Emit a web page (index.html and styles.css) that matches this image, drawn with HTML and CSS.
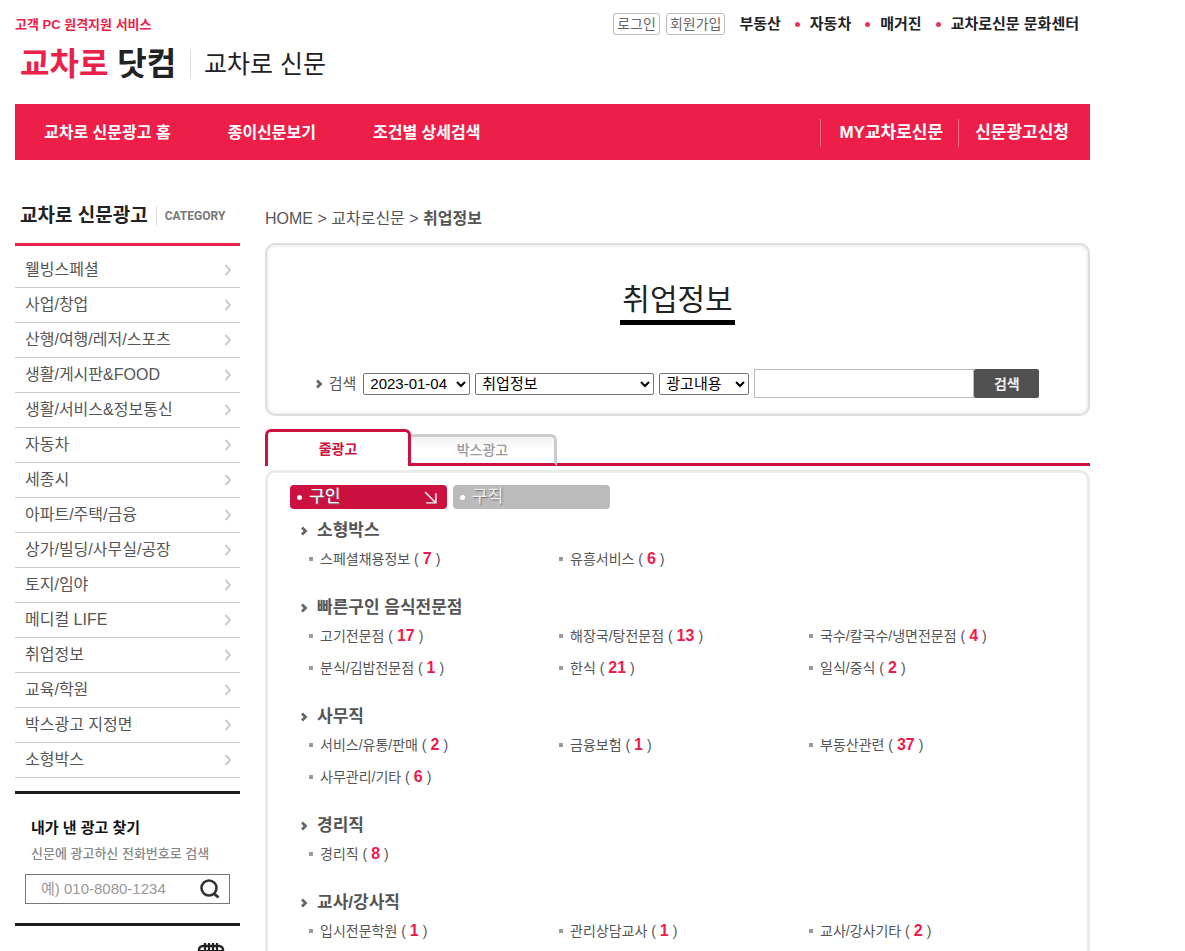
FILE: index.html
```html
<!DOCTYPE html>
<html lang="ko">
<head>
<meta charset="utf-8">
<title>교차로 신문 - 취업정보</title>
<link rel="stylesheet" href="styles.css">
</head>
<body>
<svg class="defs" aria-hidden="true">
  <symbol id="chev" viewBox="0 0 8 12"><path d="M1.500 1 6 6 1.500 11" fill="none" stroke="currentColor" stroke-width="2"/></symbol>
  <symbol id="mark" viewBox="0 0 7 10"><path d="M1 1.500 4.500 5 1 8.500" fill="none" stroke="currentColor" stroke-width="2.800"/></symbol>
</svg>
<div class="page">
  <header class="header">
    <div class="brand">
      <a class="remote" href="#">고객 PC 원격지원 서비스</a>
      <div class="logos">
        <a class="logo" href="#"><span class="logo-red">교차로</span> 닷컴</a>
        <a class="logo-sub" href="#">교차로 신문</a>
      </div>
    </div>
    <nav class="util">
      <a class="pill" href="#">로그인</a>
      <a class="pill" href="#">회원가입</a>
      <ul class="sites">
        <li><a href="#">부동산</a></li>
        <li><a href="#">자동차</a></li>
        <li><a href="#">매거진</a></li>
        <li><a href="#">교차로신문 문화센터</a></li>
      </ul>
    </nav>
  </header>

  <nav class="gnb">
    <div class="gnb-left">
      <a href="#">교차로 신문광고 홈</a>
      <a href="#">종이신문보기</a>
      <a href="#">조건별 상세검색</a>
    </div>
    <div class="gnb-right">
      <a href="#">MY교차로신문</a>
      <a href="#">신문광고신청</a>
    </div>
  </nav>

  <div class="body">
    <aside class="side">
      <h2 class="side-title"><span class="side-name">교차로 신문광고</span><span class="side-en">CATEGORY</span></h2>
      <ul class="cats">
        <li><a href="#">웰빙스페셜<svg><use href="#chev"/></svg></a></li>
        <li><a href="#">사업/창업<svg><use href="#chev"/></svg></a></li>
        <li><a href="#">산행/여행/레저/스포츠<svg><use href="#chev"/></svg></a></li>
        <li><a href="#">생활/게시판&amp;FOOD<svg><use href="#chev"/></svg></a></li>
        <li><a href="#">생활/서비스&amp;정보통신<svg><use href="#chev"/></svg></a></li>
        <li><a href="#">자동차<svg><use href="#chev"/></svg></a></li>
        <li><a href="#">세종시<svg><use href="#chev"/></svg></a></li>
        <li><a href="#">아파트/주택/금융<svg><use href="#chev"/></svg></a></li>
        <li><a href="#">상가/빌딩/사무실/공장<svg><use href="#chev"/></svg></a></li>
        <li><a href="#">토지/임야<svg><use href="#chev"/></svg></a></li>
        <li><a href="#">메디컬 LIFE<svg><use href="#chev"/></svg></a></li>
        <li><a href="#">취업정보<svg><use href="#chev"/></svg></a></li>
        <li><a href="#">교육/학원<svg><use href="#chev"/></svg></a></li>
        <li><a href="#">박스광고 지정면<svg><use href="#chev"/></svg></a></li>
        <li><a href="#">소형박스<svg><use href="#chev"/></svg></a></li>
      </ul>
      <form class="find">
        <label class="find-title" for="tel">내가 낸 광고 찾기</label>
        <p class="find-sub">신문에 광고하신 전화번호로 검색</p>
        <div class="find-box">
          <input id="tel" type="text" placeholder="예) 010-8080-1234">
          <button type="button" aria-label="검색"><svg viewBox="0 0 20 20"><circle cx="9" cy="9" r="7.500" fill="none" stroke="#333" stroke-width="2.600"/><path d="M14 14.500 18.500 18.500" stroke="#333" stroke-width="3"/></svg></button>
        </div>
      </form>
      <div class="calendar">
        <svg viewBox="0 0 28 26"><rect x="2" y="3" width="24" height="22" rx="4" fill="none" stroke="#222" stroke-width="2.500"/><path d="M2 8H26M8 0V9M12 0V9M16 0V9M20 0V9" stroke="#222" stroke-width="2.200"/></svg>
      </div>
    </aside>

    <main class="main">
      <p class="crumb"><a href="#">HOME</a> &gt; <a href="#">교차로신문</a> &gt; <b>취업정보</b></p>
      <section class="searchbox">
        <h1 class="title">취업정보</h1>
        <form class="search">
          <label class="search-label" for="date"><svg class="mark"><use href="#mark"/></svg>검색</label>
          <select id="date" class="sel-date"><option>2023-01-04</option></select>
          <select class="sel-cat" aria-label="분류"><option>취업정보</option></select>
          <select class="sel-kind" aria-label="검색 대상"><option>광고내용</option></select>
          <div class="query"><input type="text" aria-label="검색어"><button type="button">검색</button></div>
        </form>
      </section>

      <div class="tabs">
        <button class="tab tab-on" type="button">줄광고</button>
        <button class="tab tab-off" type="button">박스광고</button>
        <span class="tab-rest"></span>
      </div>

      <section class="panel">
        <div class="kinds">
          <button class="kind kind-on" type="button"><span>구인</span><svg viewBox="0 0 12 12"><path d="M1 1 11 11M11 2V11H2" fill="none" stroke="#fff" stroke-width="1.300"/></svg></button>
          <button class="kind kind-off" type="button"><span>구직</span></button>
        </div>
        <div class="group">
          <h3><svg class="mark"><use href="#mark"/></svg>소형박스</h3>
          <ul><li><a href="#">스페셜채용정보 (<b>7</b>)</a></li><li><a href="#">유흥서비스 (<b>6</b>)</a></li></ul>
        </div>
        <div class="group">
          <h3><svg class="mark"><use href="#mark"/></svg>빠른구인 음식전문점</h3>
          <ul><li><a href="#">고기전문점 (<b>17</b>)</a></li><li><a href="#">해장국/탕전문점 (<b>13</b>)</a></li><li><a href="#">국수/칼국수/냉면전문점 (<b>4</b>)</a></li><li><a href="#">분식/김밥전문점 (<b>1</b>)</a></li><li><a href="#">한식 (<b>21</b>)</a></li><li><a href="#">일식/중식 (<b>2</b>)</a></li></ul>
        </div>
        <div class="group">
          <h3><svg class="mark"><use href="#mark"/></svg>사무직</h3>
          <ul><li><a href="#">서비스/유통/판매 (<b>2</b>)</a></li><li><a href="#">금융보험 (<b>1</b>)</a></li><li><a href="#">부동산관련 (<b>37</b>)</a></li><li><a href="#">사무관리/기타 (<b>6</b>)</a></li></ul>
        </div>
        <div class="group">
          <h3><svg class="mark"><use href="#mark"/></svg>경리직</h3>
          <ul><li><a href="#">경리직 (<b>8</b>)</a></li></ul>
        </div>
        <div class="group">
          <h3><svg class="mark"><use href="#mark"/></svg>교사/강사직</h3>
          <ul><li><a href="#">입시전문학원 (<b>1</b>)</a></li><li><a href="#">관리상담교사 (<b>1</b>)</a></li><li><a href="#">교사/강사기타 (<b>2</b>)</a></li></ul>
        </div>
      </section>
    </main>
  </div>
</div>
</body>
</html>
```
FILE: styles.css
```css
* { box-sizing: border-box; }
body {
  margin: 0;
  height: 100vh;
  overflow: hidden;
  background: #fff;
  color: #555;
  font: 14px/20px "Liberation Sans", "Noto Sans CJK KR", sans-serif;
}
ul, h1, h2, h3, p { margin: 0; padding: 0; list-style: none; }
a { color: inherit; text-decoration: none; }
button { border: 0; padding: 0; font: inherit; cursor: pointer; }
.defs { display: none; }
.page { max-width: 1090px; padding-left: 15px; }

.header { display: flex; justify-content: space-between; height: 104px; }
.brand { padding-top: 15px; }
.remote { display: block; color: #eb2149; font-size: 13px; font-weight: 700; }
.logos { display: flex; align-items: center; height: 57px; padding-left: 5px; }
.logo { color: #222; font-size: 32px; font-weight: 700; line-height: 40px; }
.logo-red { color: #eb2149; }
.logo-sub {
  margin-left: 14px;
  padding-left: 13px;
  border-left: 1px solid #ddd;
  color: #222;
  font-size: 25px;
  line-height: 30px;
}
.util { display: flex; align-items: center; gap: 6px; height: 22px; margin: 13px 11px 0 0; }
.pill {
  padding: 0 3px;
  border: 1px solid #bbb;
  border-radius: 3px;
  color: #666;
  font-size: 14px;
}
.sites { display: flex; padding-left: 8px; color: #222; font-size: 15px; font-weight: 700; }
.sites li { display: flex; align-items: center; }
.sites li + li::before { content: ""; width: 5px; height: 5px; margin: 0 10px 0 14px; border-radius: 50%; background: #f0325a; }

.gnb {
  display: flex;
  align-items: center;
  justify-content: space-between;
  height: 56px;
  padding: 1px 21px 0 29px;
  background: #ed1f49;
  color: #fff;
  font-size: 16px;
  font-weight: 700;
}
.gnb-left { display: flex; gap: 57px; }
.gnb-right { display: flex; font-size: 17px; }
.gnb-right a { padding-left: 18px; border-left: 1px solid #f5718b; line-height: 28px; }
.gnb-right a + a { margin-left: 15px; padding-left: 16px; }

.body { display: flex; gap: 25px; padding-top: 46px; }
.side { flex: none; width: 225px; }
.side-title {
  display: flex;
  align-items: center;
  height: 40px;
  padding: 0 0 17px 5px;
  border-bottom: 3px solid #eb2149;
}
.side-name { color: #222; font-size: 19px; line-height: 20px; }
.side-en { margin-left: 8px; padding-left: 8px; border-left: 1px solid #ddd; color: #777; font: 700 12px/20px Roboto, sans-serif; }
.cats { padding-top: 7px; }
.cats a {
  display: flex;
  align-items: center;
  justify-content: space-between;
  height: 35px;
  padding: 0 8px 0 10px;
  border-bottom: 1px solid #ccc;
  font-size: 16px;
}
.cats svg { width: 8px; height: 12px; color: #ccc; }
.find { margin-top: 13px; padding: 24px 10px 19px; border-top: 3px solid #1c1c1c; border-bottom: 3px solid #1c1c1c; }
.find-title { display: block; padding-left: 6px; color: #111; font-size: 15px; font-weight: 700; }
.find-sub { padding: 6px 0 0 6px; color: #888; font-size: 13px; font-weight: 500; }
.find-box { display: flex; align-items: center; height: 30px; margin-top: 10px; padding: 0 9px 0 15px; border: 1px solid #777; }
.find-box input { flex: 1; min-width: 0; padding: 0; border: 0; outline: 0; font: inherit; font-size: 15px; }
.find-box input::placeholder { color: #999; }
.find-box button { display: flex; background: none; }
.find-box svg { width: 20px; height: 20px; }
.calendar { display: flex; justify-content: flex-end; padding: 17px 15px 0 0; }
.calendar svg { width: 28px; height: 26px; }

.main { flex: 1; min-width: 0; }
.crumb { padding: 3px 0 14px; font-size: 16px; }
.searchbox {
  display: flex;
  flex-direction: column;
  align-items: center;
  height: 173px;
  padding-top: 34px;
  border: 2px solid #ddd;
  border-radius: 10px;
  box-shadow: inset 0 0 4px #ddd;
}
.title { padding: 0 2px; border-bottom: 5px solid #000; color: #222; font-size: 30px; font-weight: 400; line-height: 41px; }
.search { display: flex; align-items: center; gap: 5px; margin-top: 44px; }
.search-label { display: flex; align-items: center; padding-right: 2px; font-size: 15px; }
.mark { width: 7px; height: 10px; margin-right: 6px; color: #666; }
.search select { height: 22px; padding: 0 2px; border: 1px solid #767676; border-radius: 2px; background-color: #fff; color: #000; font: inherit; font-size: 15px; }
.sel-date { width: 107px; }
.sel-cat { width: 179px; }
.sel-kind { width: 90px; }
.query { display: flex; }
.query input { width: 220px; height: 29px; border: 1px solid #bbb; outline: 0; font: inherit; }
.query button { width: 65px; height: 29px; border-radius: 2px; background: #505050; color: #eee; font-weight: 700; }

.tabs { display: flex; align-items: flex-end; height: 37px; margin-top: 13px; }
.tab { width: 146px; font-size: 14px; font-weight: 700; }
.tab-on { height: 37px; border: 3px solid #cc1040; border-bottom: 0; border-radius: 6px 6px 0 0; background: #fff; color: #cc1040; }
.tab-off { height: 32px; border: 3px solid #ccc; border-left: 0; border-bottom-color: #cc1040; border-radius: 0 6px 0 0; background: linear-gradient(#f2f2f2, #fff 50%); color: #999; font-weight: 500; }
.tab-rest { flex: 1; height: 3px; background: #cc1040; }

.panel { margin-top: 4px; padding: 12px 22px; border: 3px solid #ebebeb; border-radius: 10px; }
.kinds { display: flex; gap: 6px; margin-bottom: 10px; }
.kind { display: flex; align-items: center; justify-content: space-between; width: 157px; height: 24px; padding: 0 10px 0 7px; border-radius: 4px; color: #fff; font-size: 17px; text-shadow: 1px 1px 1px #777; }
.kind span { display: flex; align-items: center; gap: 7px; }
.kind span::before { content: ""; width: 5px; height: 5px; border-radius: 50%; background: #fff; }
.kind svg { width: 13px; height: 13px; }
.kind-on { background: #cc1040; }
.kind-off { background: #bbb; color: #eee; }
.group { padding-left: 11px; }
.group + .group { margin-top: 21px; }
.group h3 { display: flex; align-items: center; height: 24px; font-size: 17px; font-weight: 700; }
.group h3 .mark { margin-right: 9px; }
.group ul { display: grid; grid-template-columns: repeat(3, 250px); padding-left: 8px; }
.group li { display: flex; align-items: center; gap: 7px; height: 32px; }
.group li::before { content: ""; width: 4px; height: 4px; background: #999; }
.group li b { padding: 0 4px; color: #eb1c4e; font-size: 16px; }
```
